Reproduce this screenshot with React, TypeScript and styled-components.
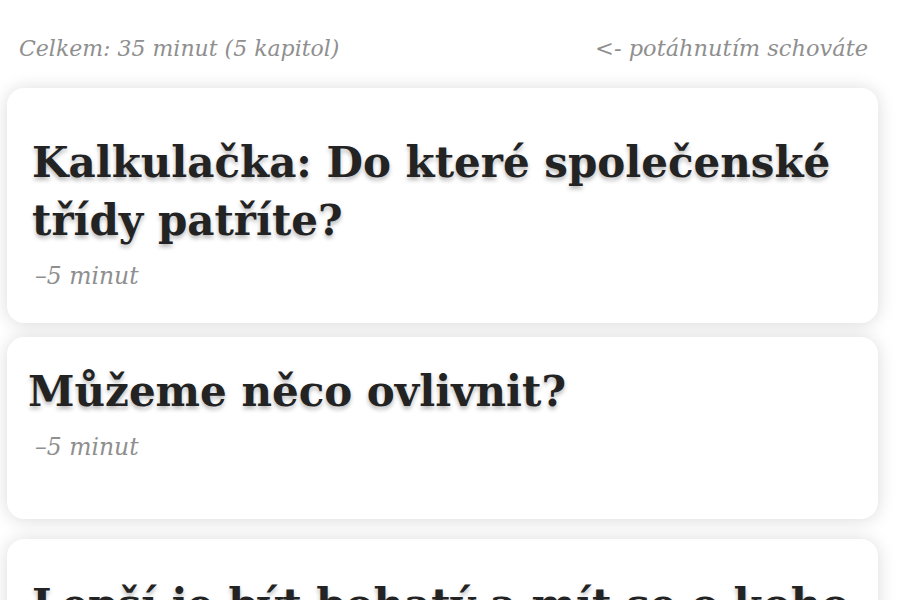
import React from 'react';
import styled, { createGlobalStyle } from 'styled-components';

const Global = createGlobalStyle`
  html, body { margin: 0; padding: 0; background: #fff; }
  body { font-family: 'DejaVu Serif', 'Liberation Serif', serif; overflow: hidden; }
`;

const Page = styled.div`
  width: 900px; height: 600px; overflow: hidden;
  background: #fff;
`;

const Header = styled.div`
  display: flex; justify-content: space-between; align-items: baseline;
  padding: 35px 32px 0 19px;
  height: 60px; box-sizing: border-box;
`;

const Note = styled.span<{ $size?: number }>`
  font-style: italic; font-size: ${p => p.$size ?? 22}px; color: #8f8f8f;
`;

const List = styled.div`
  display: flex; flex-direction: column;
  padding: 28px 22px 0 7px;
`;

const Card = styled.article<{ $top: number; $bottom: number; $gap: number; $left: number }>`
  background: #fff; border-radius: 17px;
  box-shadow: 0 1px 18px rgba(0,0,0,.15);
  padding: ${p => p.$top}px 14px ${p => p.$bottom}px ${p => p.$left}px;
  margin-bottom: ${p => p.$gap}px;
`;

const Title = styled.h2`
  margin: 0; font-weight: 700; font-size: 42px; line-height: 58px; color: #232323;
  text-shadow: 0 3px 4px rgba(0,0,0,.28);
`;

const Meta = styled.div<{ $indent: number }>`
  margin-top: 9px; padding-left: ${p => p.$indent}px;
  font-style: italic; font-size: 23.5px; line-height: 34px; color: #8f8f8f;
`;

const chapters = [
  { title: 'Kalkulačka: Do které společenské třídy patříte?', meta: '–5 minut', top: 46, bottom: 30, gap: 14, left: 25 },
  { title: 'Můžeme něco ovlivnit?', meta: '–5 minut', top: 26, bottom: 55, gap: 20, left: 21 },
  { title: 'Lepší je být bohatý a mít se o koho opřít', meta: '–5 minut', top: 37, bottom: 30, gap: 20, left: 25 },
];

export default function App() {
  return (
    <Page>
      <Global />
      <Header>
        <Note>Celkem: 35 minut (5 kapitol)</Note>
        <Note $size={22.5}>&lt;- potáhnutím schováte</Note>
      </Header>
      <List>
        {chapters.map(c => (
          <Card key={c.title} $top={c.top} $bottom={c.bottom} $gap={c.gap} $left={c.left}>
            <Title>{c.title}</Title>
            <Meta $indent={3 + 25 - c.left}>{c.meta}</Meta>
          </Card>
        ))}
      </List>
    </Page>
  );
}
